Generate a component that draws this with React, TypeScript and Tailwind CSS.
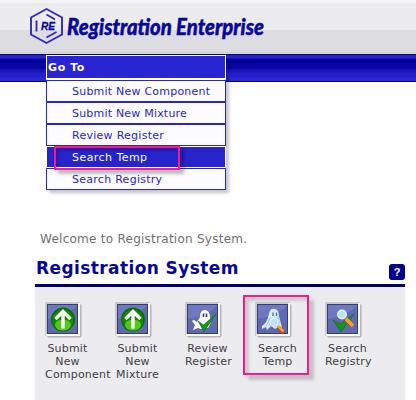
import React from "react";

const verdana = "font-['Verdana','DejaVu_Sans',sans-serif]";

const menu = [
  { label: "Submit New Component", spacing: "tracking-[0.22px]" },
  { label: "Submit New Mixture", spacing: "tracking-[0.2px]" },
  { label: "Review Register", spacing: "tracking-[0.27px]" },
  { label: "Search Temp", spacing: "tracking-[0.45px]", active: true },
  { label: "Search Registry", spacing: "tracking-[0.27px]" },
];

function Magnifier({ x, y }: { x: number; y: number }) {
  return (
    <g transform={`translate(${x} ${y})`}>
      <path d="M4 5 L10 11" stroke="#a65324" strokeWidth="4" />
      <path d="M4 4 L9.5 9.5" stroke="#ff9e22" strokeWidth="2.6" />
      <circle cx="0" cy="0" r="4.2" fill="#b9e4f8" stroke="#e1f5ff" strokeWidth="1.5" />
    </g>
  );
}

function Tile({ kind }: { kind: string }) {
  return (
    <svg className="block h-[36px] w-[37px] shrink-0" viewBox="0 0 37 36">
      <rect x="2" y="2" width="34.5" height="33.5" rx="2" fill="#b5b4b6" />
      <rect x="0" y="0" width="35" height="34" rx="1" fill="#c9c8ca" />
      <path d="M1 33 H34 V1" fill="none" stroke="#fafafa" strokeWidth="2" />
      <rect x="2" y="2" width="31" height="30" fill="#343d78" />
      <rect x="3" y="3" width="29" height="28" fill="#5f69b0" />
      <path d="M3 17 Q20 15 32 4 V3 H3 Z" fill="#6f79c0" />
      <g transform="translate(2 2)">
        {kind === "up" && (
          <>
            <circle cx="16" cy="15.5" r="12" fill="#087000" />
            <circle cx="16" cy="16" r="10.5" fill="#138900" />
            <ellipse cx="16" cy="21" rx="8" ry="5.5" fill="#54c719" />
            <path d="M16 24.5 V8 M8.5 15 L16 7.5 L23.5 15" fill="none" stroke="#fff" strokeWidth="3.4" />
          </>
        )}
        {kind === "review" && (
          <>
            <path d="M13 13 Q13 6 18 6 Q23 7 23 13 L24 18 L21 24 L17 24 L14 25 L11 24 L6 26 L8 21 L5 17 L7 16 L10 18 Z" fill="#fff" />
            <path d="M16.5 9.5 V13 M19.5 9.5 V13" stroke="#26388e" strokeWidth="1.6" />
            <path d="M11 17 L16.5 21 L29 10 L17 27.5 Z" fill="#15951b" stroke="#087510" strokeWidth=".7" />
          </>
        )}
        {kind === "temp" && (
          <>
            <path d="M12 10 Q13 4 18 5 Q22 6 22 12 L25 24 L21 23 L18 25 L14 22 L10 26 L9 23 L5 25 L5 22 Q10 19 12 10 Z" fill="#e0ecf8" />
            <path d="M16 8.5 V12 M19.5 8.5 V12" stroke="#4a77ae" strokeWidth="1.4" />
            <path d="M13 14 L9 23 M21 12 L22 20" stroke="#a9c4e2" />
            <circle cx="17" cy="18" r="5.3" fill="#6f9fce" />
            <Magnifier x={17} y={18} />
          </>
        )}
        {kind === "registry" && (
          <>
            <path d="M6 16 L13.5 20 L27 10 L14 28 Z" fill="#15951b" stroke="#087510" strokeWidth=".7" />
            <Magnifier x={15} y={10.5} />
            <path d="M19 15 L26 22" stroke="#ff9e22" strokeWidth="3.5" />
          </>
        )}
      </g>
    </svg>
  );
}

const actions = [
  { kind: "up", lines: ["Submit", "New", "Component"] },
  { kind: "up", lines: ["Submit", "New", "Mixture"] },
  { kind: "review", lines: ["Review", "Register"] },
  { kind: "temp", lines: ["Search", "Temp"] },
  { kind: "registry", lines: ["Search", "Registry"] },
];

export default function App() {
  return (
    <main className={`relative flex h-[400px] w-[416px] flex-col overflow-hidden bg-[#fefefe] ${verdana}`}>
      <header className="h-[54px] shrink-0 border-t-[3px] border-[#f4f4f4] bg-[linear-gradient(#ecebee_0_27px,#dddce0_27px_49px,#cfced2_49px_50px,#dddce0_50px)]">
        <svg className="block h-[51px] w-[416px] overflow-visible" viewBox="0 3 416 51">
          <g fill="none" stroke="#302cba" strokeWidth="1.9">
            <path d="M46.5 9 L62 17.5 V34.5 L46.5 43 L31 34.5 V17.5 Z" />
            <path d="M36.5 20.5 V31.5 M46.5 14.5 L55 19.5 M46.5 37.5 L56.5 32" />
          </g>
          <text x="41" y="30" className="font-['Liberation_Sans',sans-serif] text-[11px] font-bold italic" fill="#08089a" stroke="#08089a" strokeWidth=".3" textLength="14" lengthAdjust="spacingAndGlyphs">RE</text>
          <text x="67" y="35" className="font-['Lato',sans-serif] text-[23px] font-black italic" fill="#08089b" stroke="#08089b" strokeWidth=".5" textLength="197" lengthAdjust="spacingAndGlyphs">Registration Enterprise</text>
        </svg>
      </header>
      <div className="h-[28px] shrink-0 bg-[linear-gradient(#000082_0_1px,#2824c6_1px_4px,#1713b5_4px_5px,#000096_6px_9px,#0805a5_9px_14px,#1814b5_16px_18px,#241fc6_19px_23px,#2c27d4_24px_27px,#000091_27px)]" />
      <nav className="absolute left-[46px] top-[55px] w-[180px] shadow-[3px_3px_3px_rgba(0,0,0,.22)]">
        <div className="flex h-[24px] items-center border border-white bg-[#2925d2] pl-px text-[11px] font-bold leading-none tracking-[0.6px] text-white">Go To</div>
        <div className="border-t border-white bg-white">
          {menu.map((item) => (
            <div
              key={item.label}
              className={`flex h-[22px] items-center border pl-[25px] text-[11px] leading-none whitespace-nowrap ${item.spacing} ${item.active ? "border-white bg-[#2724cb] text-white" : "border-[#2925c9] bg-[#fcfcff] text-[#2925c9]"}`}
            >
              {item.label}
            </div>
          ))}
        </div>
      </nav>
      <div className="absolute left-[54px] top-[146px] h-[24px] w-[126px] border-2 border-[#ff1491] shadow-[4px_4px_3px_rgba(0,0,0,.25),inset_3px_3px_3px_rgba(0,0,0,.16)]" />
      <p className="mt-[150px] ml-[40px] h-[14px] shrink-0 text-[12px] leading-[14px] tracking-[0.26px] whitespace-nowrap text-[#707070]">Welcome to Registration System.</p>
      <section className="mt-[14px] ml-[35px] flex w-[370px] grow flex-col">
        <div className="flex h-[24px] shrink-0 justify-between">
          <h1 className="pl-px text-[17px] font-bold leading-[17px] tracking-[0.4px] whitespace-nowrap text-[#060696]">Registration System</h1>
          <span className="mt-[4px] flex h-[16px] w-[16px] items-center justify-center rounded-[3px] bg-[#00008c] font-['Liberation_Sans',sans-serif] text-[11px] font-bold leading-none text-white">?</span>
        </div>
        <div className="flex grow border-t-[3px] border-[#000065] bg-[#ecebee] pt-[15px] pl-[10px]">
          {actions.map((action, index) => (
            <div key={index} className="w-[70px] shrink-0">
              <Tile kind={action.kind} />
              <div className="mt-[4px] flex w-[45px] flex-col text-[11px] leading-[13px] tracking-[0.2px] text-[#404044]">
                {action.lines.map((line) => (
                  <span key={line} className={line.length > 7 ? "whitespace-nowrap" : "text-center whitespace-nowrap"}>{line}</span>
                ))}
              </div>
            </div>
          ))}
        </div>
      </section>
      <div className="absolute left-[243px] top-[295px] h-[80px] w-[66px] border-2 border-[#ff1491] shadow-[5px_5px_3px_rgba(0,0,0,.18),inset_4px_4px_3px_rgba(0,0,0,.14)]" />
    </main>
  );
}
